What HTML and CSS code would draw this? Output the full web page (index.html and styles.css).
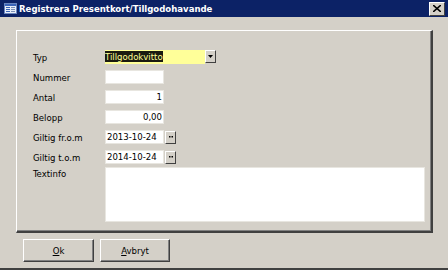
FILE: index.html
```html
<!DOCTYPE html>
<html lang="sv">
<head>
    <meta charset="UTF-8">
    <title>Registrera Presentkort/Tillgodohavande</title>
    <link rel="stylesheet" href="styles.css">
</head>
<body>
    <div class="window">
        <div class="titlebar">
            <svg class="app-icon" width="13" height="11" viewBox="0 0 13 11">
                <rect x="0.5" y="0.5" width="12" height="10" fill="#e8eef8" stroke="#6a86c0"/>
                <rect x="1" y="1" width="11" height="2" fill="#3a64b8"/>
                <rect x="2" y="4" width="4" height="1" fill="#3a64b8"/>
                <rect x="7" y="4" width="4" height="1" fill="#7b8fb8"/>
                <rect x="2" y="6" width="4" height="1" fill="#3a64b8"/>
                <rect x="7" y="6" width="4" height="1" fill="#7b8fb8"/>
                <rect x="2" y="8" width="4" height="1" fill="#3a64b8"/>
                <rect x="7" y="8" width="4" height="1" fill="#7b8fb8"/>
            </svg>
            <span class="title">Registrera Presentkort/Tillgodohavande</span>
            <div class="close-btn">
                <svg width="8" height="7" viewBox="0 0 8 7">
                    <path d="M0 0 L8 7 M8 0 L0 7" stroke="#000" stroke-width="1.6"/>
                </svg>
            </div>
        </div>

        <div class="content">
            <div class="group">
                <div class="row">
                    <label>Typ</label>
                    <div class="combo">
                        <span class="combo-text"><span class="selected">Tillgodokvitto</span></span>
                        <span class="small-btn">
                            <svg width="5" height="3" viewBox="0 0 5 3"><path d="M0 0 H5 L2.5 3 Z" fill="#000"/></svg>
                        </span>
                    </div>
                </div>
                <div class="row">
                    <label>Nummer</label>
                    <div class="field"></div>
                </div>
                <div class="row">
                    <label>Antal</label>
                    <div class="field num">1</div>
                </div>
                <div class="row">
                    <label>Belopp</label>
                    <div class="field num">0,00</div>
                </div>
                <div class="row">
                    <label>Giltig fr.o.m</label>
                    <div class="field">2013-10-24</div>
                    <span class="small-btn date-btn">
                        <svg width="4" height="2" viewBox="0 0 4 2"><rect x="0" y="0" width="1.5" height="1.5" fill="#000"/><rect x="2.5" y="0" width="1.5" height="1.5" fill="#000"/></svg>
                    </span>
                </div>
                <div class="row">
                    <label>Giltig t.o.m</label>
                    <div class="field">2014-10-24</div>
                    <span class="small-btn date-btn">
                        <svg width="4" height="2" viewBox="0 0 4 2"><rect x="0" y="0" width="1.5" height="1.5" fill="#000"/><rect x="2.5" y="0" width="1.5" height="1.5" fill="#000"/></svg>
                    </span>
                </div>
                <div class="row text-row">
                    <label>Textinfo</label>
                    <div class="textarea"></div>
                </div>
            </div>

            <div class="buttons">
                <button class="btn btn-ok"><u>O</u>k</button>
                <button class="btn"><u>A</u>vbryt</button>
            </div>
        </div>
    </div>
</body>
</html>
```

FILE: styles.css
```css
body {
    margin: 0;
    padding: 0;
    background: #d4d0c8;
    font-family: "DejaVu Sans Condensed", "Liberation Sans", sans-serif;
    font-size: 9.5px;
}
.window {
    width: 448px;
    height: 270px;
    background: #d4d0c8;
    overflow: hidden;
    display: flex;
    flex-direction: column;
}
.titlebar {
    height: 17px;
    background: #0c2266;
    display: flex;
    align-items: center;
    padding-left: 4px;
    padding-right: 3px;
}
.app-icon {
    margin-right: 2px;
}
.title {
    color: #fff;
    font-weight: bold;
    font-size: 9.5px;
    flex: 1;
}
.close-btn {
    width: 14px;
    height: 12px;
    background: #d4d0c8;
    border-top: 1px solid #fff;
    border-left: 1px solid #fff;
    border-right: 1px solid #404040;
    border-bottom: 1px solid #404040;
    display: flex;
    align-items: center;
    justify-content: center;
}
.content {
    flex: 1;
    padding: 13px 0 0 16px;
    border-bottom: 2px solid #404040;
}
.group {
    width: 414px;
    height: 181px;
    border-top: 1px solid #fff;
    border-left: 1px solid #fff;
    border-right: 2px solid #404040;
    border-bottom: 2px solid #404040;
    box-shadow: inset -1px -1px 0 #808080;
    padding-top: 19px;
    display: flex;
    flex-direction: column;
    gap: 6px;
}
.row {
    display: flex;
    align-items: center;
    height: 14px;
}
.row label {
    width: 72px;
    padding-left: 16px;
    color: #000;
}
.field {
    width: 55px;
    height: 12px;
    background: #fff;
    border: 1px solid #e8e6e0;
    line-height: 12px;
    padding: 0 1px;
    color: #000;
    white-space: nowrap;
    overflow: hidden;
}
.field.num {
    text-align: right;
}
.combo {
    display: flex;
    width: 111px;
    height: 14px;
}
.combo-text {
    flex: 1;
    background: #ffff99;
    line-height: 14px;
    white-space: nowrap;
}
.selected {
    background: #1a1a10;
    color: #ffff99;
}
.small-btn {
    width: 9px;
    height: 11px;
    background: #d4d0c8;
    border-top: 1px solid #fff;
    border-left: 1px solid #fff;
    border-right: 1px solid #404040;
    border-bottom: 1px solid #404040;
    display: flex;
    align-items: center;
    justify-content: center;
}
.date-btn {
    margin-left: 1px;
}
.text-row {
    align-items: flex-start;
    height: 55px;
    margin-top: -3px;
}
.text-row label {
    padding-top: 1px;
}
.textarea {
    width: 318px;
    height: 53px;
    background: #fff;
    border: 1px solid #e8e6e0;
}
.buttons {
    display: flex;
    gap: 6px;
    padding: 6px 0 0 7px;
}
.btn {
    width: 70px;
    height: 23px;
    background: #d4d0c8;
    border-top: 1px solid #fff;
    border-left: 1px solid #fff;
    border-right: 1px solid #404040;
    border-bottom: 1px solid #404040;
    box-shadow: inset -1px -1px 0 #808080;
    font-family: "DejaVu Sans Condensed", "Liberation Sans", sans-serif;
    font-size: 9.5px;
    color: #000;
    padding: 0;
}
.btn-ok {
    width: 71px;
}
```
